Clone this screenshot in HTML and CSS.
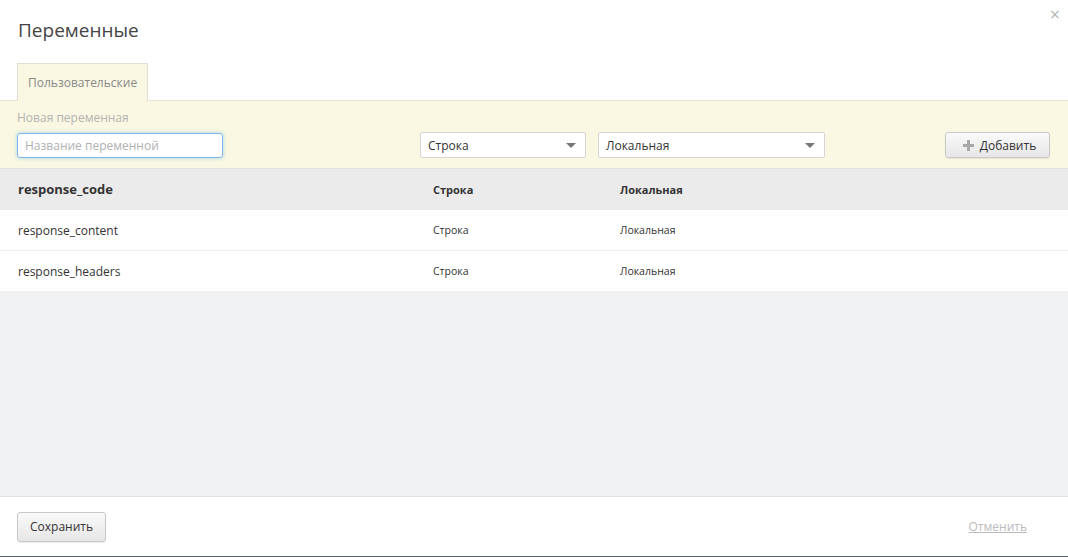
FILE: index.html
```html
<!DOCTYPE html>
<html lang="ru">
<head>
<meta charset="utf-8">
<link rel="stylesheet" href="styles.css">
</head>
<body>
<div class="dialog">
  <div class="head">
    <h1 class="title">Переменные</h1>
    <span class="close">&#215;</span>
  </div>
  <div class="tabs">
    <div class="tab">Пользовательские</div>
  </div>
  <div class="panel">
    <div class="label">Новая переменная</div>
    <div class="form">
      <input class="name" type="text" placeholder="Название переменной">
      <div class="select s1"><span>Строка</span><i class="caret"></i></div>
      <div class="select s2"><span>Локальная</span><i class="caret"></i></div>
      <button class="btn add"><svg width="11" height="11" viewBox="0 0 11 11"><path d="M4 0h3v4h4v3H7v4H4V7H0V4h4z" fill="#a9a9a9"/></svg>Добавить</button>
    </div>
  </div>
  <div class="table">
    <div class="row hdr">
      <div class="c-name">response_code</div>
      <div class="c-type">Строка</div>
      <div class="c-scope">Локальная</div>
    </div>
    <div class="row">
      <div class="c-name">response_content</div>
      <div class="c-type">Строка</div>
      <div class="c-scope">Локальная</div>
    </div>
    <div class="row">
      <div class="c-name">response_headers</div>
      <div class="c-type">Строка</div>
      <div class="c-scope">Локальная</div>
    </div>
  </div>
  <div class="filler"></div>
  <div class="foot">
    <button class="btn save">Сохранить</button>
    <a class="cancel" href="#">Отменить</a>
  </div>
</div>
</body>
</html>
```

FILE: styles.css
```css
html, body {
  margin: 0;
  padding: 0;
}
body {
  font-family: "Open Sans", "Liberation Sans", sans-serif;
  color: #333;
  background: #fff;
}
.dialog {
  height: 556px;
  border-bottom: 1px solid #56666c;
  display: flex;
  flex-direction: column;
  background: #fff;
}
.head {
  height: 63px;
  position: relative;
}
.title {
  margin: 0;
  padding: 15px 0 0 18px;
  font-size: 19px;
  font-weight: 400;
  color: #444;
  line-height: 30px;
}
.close {
  position: absolute;
  right: 8px;
  top: 3px;
  font-size: 18px;
  color: #b5b5b5;
  line-height: 22px;
}
.tabs {
  display: flex;
  padding-left: 17px;
  height: 37px;
  border-bottom: 1px solid #e4e2d2;
}
.tab {
  background: #faf8e2;
  border: 1px solid #e2e0d2;
  border-bottom: none;
  padding: 0 10px;
  width: 109px;
  font-size: 12px;
  color: #888;
  line-height: 37px;
  margin-bottom: -1px;
}
.panel {
  background: #faf8e2;
  height: 68px;
  padding: 9px 18px 0 17px;
  box-sizing: border-box;
  border-bottom: 1px solid #e2e2e2;
}
.label {
  font-size: 12px;
  color: #b3b3b3;
  line-height: 16px;
}
.form {
  display: flex;
  align-items: center;
  margin-top: 6px;
}
.name {
  width: 206px;
  height: 25px;
  box-sizing: border-box;
  border: 1px solid #7cb8ef;
  border-radius: 3px;
  box-shadow: 0 0 4px rgba(102, 175, 233, 0.5);
  padding: 0 7px;
  font-family: inherit;
  font-size: 12px;
  outline: none;
  background: #fff;
}
.name::placeholder {
  color: #b0b0b0;
}
.select {
  display: flex;
  align-items: center;
  justify-content: space-between;
  height: 26px;
  box-sizing: border-box;
  background: #fff;
  border: 1px solid #d6d6d6;
  border-radius: 2px;
  padding: 0 9px 0 7px;
  font-size: 12px;
  color: #333;
}
.s1 {
  width: 166px;
  margin-left: 197px;
}
.s2 {
  width: 227px;
  margin-left: 12px;
}
.caret {
  width: 0;
  height: 0;
  border-left: 5px solid transparent;
  border-right: 5px solid transparent;
  border-top: 5px solid #777;
}
.btn {
  font-family: inherit;
  font-size: 12px;
  color: #333;
  border: 1px solid #c8c8c8;
  border-radius: 3px;
  background: linear-gradient(#fafafa, #e6e6e6);
  box-shadow: 0 1px 1px rgba(0,0,0,0.08);
  cursor: pointer;
}
.add {
  margin-left: auto;
  width: 105px;
  height: 26px;
  display: flex;
  align-items: center;
  justify-content: center;
  gap: 6px;
  padding: 0 0 0 4px;
}
.table {
  display: flex;
  flex-direction: column;
}
.row {
  display: flex;
  align-items: center;
  height: 40px;
  border-bottom: 1px solid #f0f0f0;
  background: #fff;
  font-size: 10.5px;
  color: #333;
}
.row .c-name {
  font-size: 12px;
}
.row.hdr {
  background: #ebebeb;
  border-bottom: 1px solid #ebebeb;
  font-weight: 700;
  font-size: 11px;
}
.row.hdr .c-name {
  font-size: 13px;
}
.c-name {
  width: 415px;
  padding-left: 18px;
}
.c-type {
  width: 187px;
}
.c-scope {
  flex: 1;
}
.filler {
  flex: 1;
  background: #f1f2f4;
  border-bottom: 1px solid #e2e3e5;
}
.foot {
  height: 59px;
  display: flex;
  align-items: center;
  padding: 0 17px;
}
.save {
  width: 89px;
  height: 30px;
  padding: 0;
}
.cancel {
  margin-left: auto;
  margin-right: 24px;
  font-size: 12px;
  color: #bbb;
  text-decoration: underline;
}
```
